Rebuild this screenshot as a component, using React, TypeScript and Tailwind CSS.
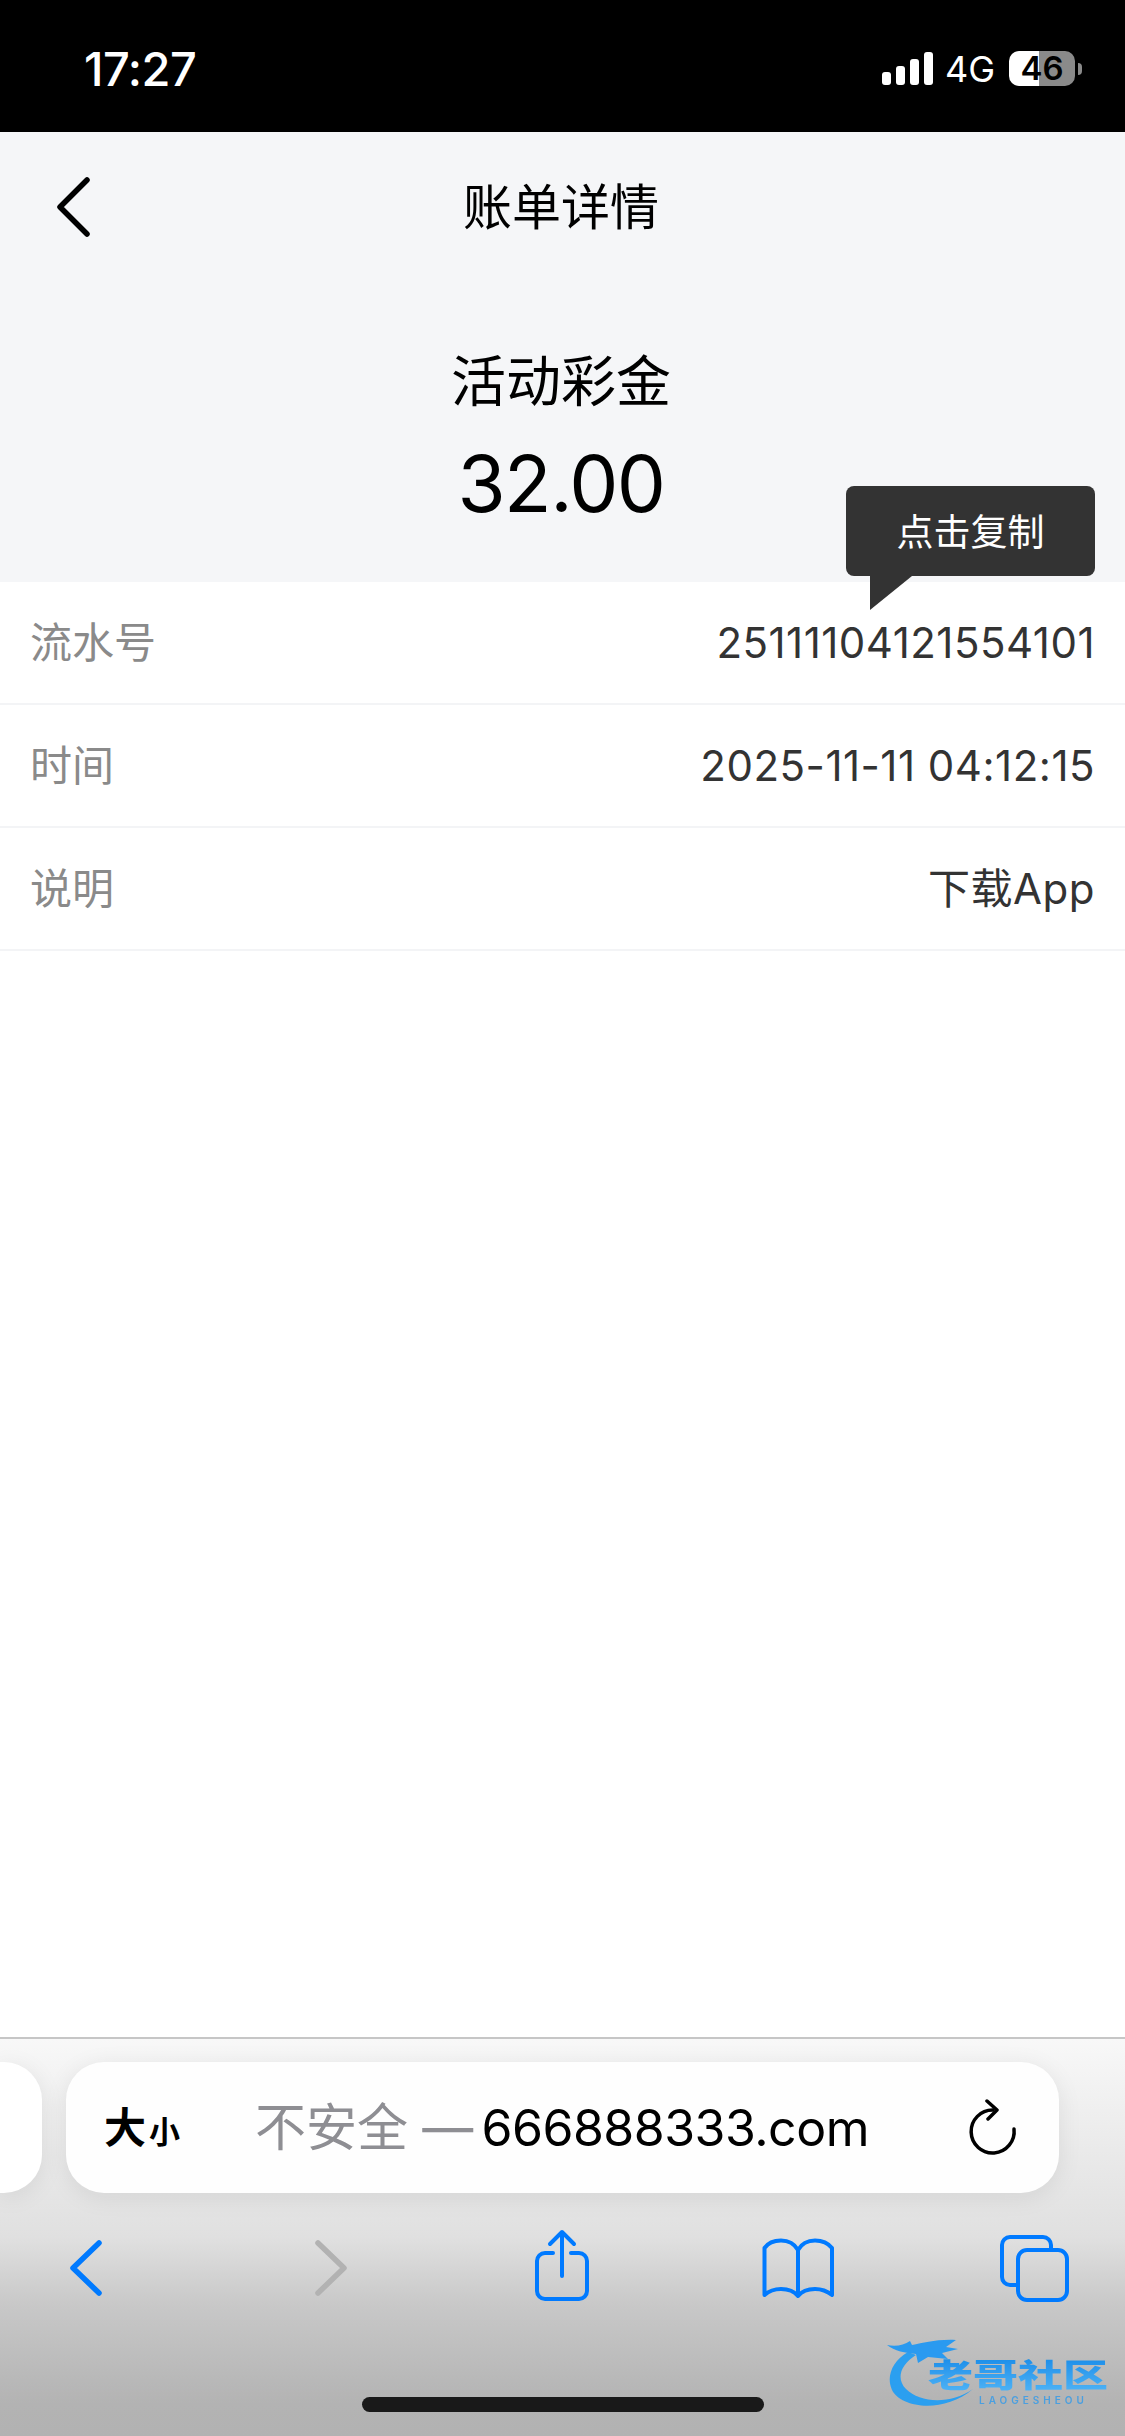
const rows = [
  { label: '流水号', value: '25111104121554101' },
  { label: '时间', value: '2025-11-11 04:12:15' },
  { label: '说明', value: '下载App' },
]

function StatusBar() {
  return (
    <div className="flex h-[132px] shrink-0 items-center justify-between bg-black pl-[84px] pr-[43px] pt-[5px] text-white">
      <span className="text-[47px] font-medium leading-none tracking-[-0.5px]">17:27</span>
      <div className="flex items-center">
        <div className="flex h-[33px] items-end gap-[5px]">
          <div className="h-[13px] w-[9px] rounded-[3px] bg-white" />
          <div className="h-[19px] w-[9px] rounded-[3px] bg-white" />
          <div className="h-[26px] w-[9px] rounded-[3px] bg-white" />
          <div className="h-[33px] w-[9px] rounded-[3px] bg-white" />
        </div>
        <span className="ml-[12px] text-[36px] font-normal leading-none">4G</span>
        <div className="ml-[14px] flex h-[35px] w-[66px] items-center justify-center rounded-[10px] bg-[linear-gradient(90deg,#ffffff_30px,#8a8a8a_30px)] text-[33px] font-semibold leading-none text-black">
          46
        </div>
        <div className="ml-[3px] h-[12px] w-[4px] rounded-r-full bg-[#8a8a8a]" />
      </div>
    </div>
  )
}

function DetailHeader() {
  return (
    <div className="shrink-0 bg-[#f5f6f8] pr-[3px] text-black">
      <div className="grid h-[150px] grid-cols-[1fr_auto_1fr] items-center">
        <svg className="ml-[51px] h-[66px] w-[44px]" viewBox="0 0 44 66" fill="none" stroke="#000" strokeWidth="5.5" strokeLinecap="round" strokeLinejoin="round">
          <path d="M36 6 L9 33 L36 60" />
        </svg>
        <h1 className="text-[49px] font-normal leading-none">账单详情</h1>
        <div />
      </div>
      <div className="flex h-[300px] flex-col items-center pt-[72px]">
        <p className="text-[55px] leading-none">活动彩金</p>
        <p className="mt-[36px] text-[78px] leading-none tracking-[-1.5px]">32.00</p>
      </div>
    </div>
  )
}

function CopyTooltip() {
  return (
    <div className="absolute right-[30px] top-[-96px] flex h-[90px] w-[249px] items-center justify-center rounded-[8px] bg-[#333333] pt-[2px] text-[37px] leading-none text-white">
      点击复制
      <div className="absolute left-[24px] top-[90px] h-[34px] w-[42px] bg-[#333333] [clip-path:polygon(0_0,100%_0,0_100%)]" />
    </div>
  )
}

function SafariToolbar() {
  return (
    <div className="relative h-[399px] shrink-0 border-t-2 border-[#c6c6c6] bg-[linear-gradient(180deg,#f8f8f8_0%,#e9e9e9_30%,#e0e0e0_50%,#c8c8c8_67%,#b3b3b3_92%,#b2b2b2_100%)]">
      <div className="flex gap-[24px] pt-[23px]">
        <div className="h-[131px] w-[42px] shrink-0 rounded-r-[38px] bg-white shadow-[0_4px_24px_rgba(0,0,0,0.08)]" />
        <div className="flex h-[131px] w-[993px] shrink-0 items-center rounded-[38px] bg-[#fefefe] pl-[38px] pr-[41px] shadow-[0_4px_24px_rgba(0,0,0,0.08)]">
          <span className="text-[42px] font-bold leading-none text-black">大</span>
          <span className="ml-[3px] mt-[8px] text-[31px] font-bold leading-none text-black">小</span>
          <span className="ml-[75px] text-[51px] leading-none text-[#8e8e93]">不安全 —</span>
          <span className="ml-[8px] text-[50px] leading-none tracking-[-0.5px] text-black">666888333.com</span>
          <svg className="ml-auto h-[58px] w-[50px]" viewBox="0 0 50 58" fill="none" stroke="#000" strokeWidth="3.5" strokeLinecap="round" strokeLinejoin="round">
            <path d="M25 11 A21.5 21.5 0 1 0 46 30" />
            <path d="M19 2 L29 11 L20 20" />
          </svg>
        </div>
      </div>

      <div className="mt-[33px] flex justify-between pl-[38px] pr-[43px]">
        <svg className="h-[80px] w-[96px]" viewBox="0 0 96 80" fill="none" stroke="#007aff" strokeWidth="5.5" strokeLinecap="round" strokeLinejoin="round">
          <path d="M61 17 L35 42 L61 67" />
        </svg>
        <svg className="h-[80px] w-[96px]" viewBox="0 0 96 80" fill="none" stroke="#b2b2b2" strokeWidth="5.5" strokeLinecap="round" strokeLinejoin="round">
          <path d="M43 17 L69 42 L43 67" />
        </svg>
        <svg className="h-[80px] w-[96px]" viewBox="0 0 96 80" fill="none" stroke="#007aff" strokeWidth="4" strokeLinecap="round" strokeLinejoin="round">
          <path d="M41 27 H33 a8 8 0 0 0 -8 8 V65 a8 8 0 0 0 8 8 H67 a8 8 0 0 0 8 -8 V35 a8 8 0 0 0 -8 -8 H59" />
          <path d="M50 50 V6 M38 18 L50 6 L62 18" />
        </svg>
        <svg className="h-[80px] w-[96px]" viewBox="0 0 96 80" fill="none" stroke="#007aff" strokeWidth="4" strokeLinecap="round" strokeLinejoin="round">
          <path d="M49 24 C45 17 38 14.5 32 14.5 C25 14.5 19 17 15.5 22 V69 C20 65 26 63 32 63 C39 63 45 65 49 70 C53 65 59 63 66 63 C72 63 78 65 83 69 V22 C79 17 73 14.5 66 14.5 C60 14.5 53 17 49 24 V70" />
        </svg>
        <svg className="h-[80px] w-[96px]" viewBox="0 0 96 80" fill="none" stroke="#007aff" strokeWidth="4" strokeLinecap="round" strokeLinejoin="round">
          <path d="M31 59 H24 a8 8 0 0 1 -8 -8 V19 a8 8 0 0 1 8 -8 H57 a8 8 0 0 1 8 8 V24" />
          <rect x="32" y="24" width="49" height="50" rx="9" />
        </svg>
      </div>

      {/* home indicator */}
      <div className="absolute left-[362px] top-[358px] h-[15px] w-[402px] rounded-full bg-[#191919]" />

      {/* site watermark */}
      <div className="absolute left-[880px] top-[298px] h-[80px] w-[240px] blur-[0.6px]">
        <svg className="absolute left-0 top-[-2px] h-[80px] w-[100px]" viewBox="0 0 100 80">
          <path d="M28 17 C12 26 6 42 12 55 C20 72 62 80 93 54 C70 70 40 68 26 54 C16 44 20 30 36 20 Z" fill="#2b9ff0" />
          <path d="M7 10 C16 12 24 10 30 6 L32 10 C44 8 56 4 76 5 L66 12 L78 14 L62 18 L68 24 L48 22 L38 28 L36 19 C26 18 14 16 7 10 Z" fill="#2a9af0" />
        </svg>
        <div className="absolute left-[48px] top-[22px] origin-top scale-y-[0.72] bg-linear-to-b from-[#1c8fea] to-[#4cb2f5] bg-clip-text text-[45px] font-black leading-[45px] text-transparent">老哥社区</div>
        <div className="absolute left-[99px] top-[58px] text-[10px] font-semibold leading-none tracking-[4px] text-[#4a9fe0]">LAOGESHEOU</div>
      </div>
    </div>
  )
}

export default function App() {
  return (
    <div className="flex h-[2436px] w-[1125px] flex-col overflow-hidden bg-white font-['Inter','Noto_Sans_CJK_SC',sans-serif]">
      <StatusBar />
      <DetailHeader />
      <div className="relative shrink-0">
        {rows.map((row) => (
          <div key={row.label} className="flex h-[123px] items-center justify-between border-b-2 border-[#f3f4f6] pl-[30px] pr-[30px]">
            <span className="text-[42px] leading-none text-[#8a8a8a]">{row.label}</span>
            <span className="text-[42px] leading-none tracking-[0.5px] text-[#333333]">{row.value}</span>
          </div>
        ))}
        <CopyTooltip />
      </div>
      <div className="flex-1 bg-white" />
      <SafariToolbar />
    </div>
  )
}
